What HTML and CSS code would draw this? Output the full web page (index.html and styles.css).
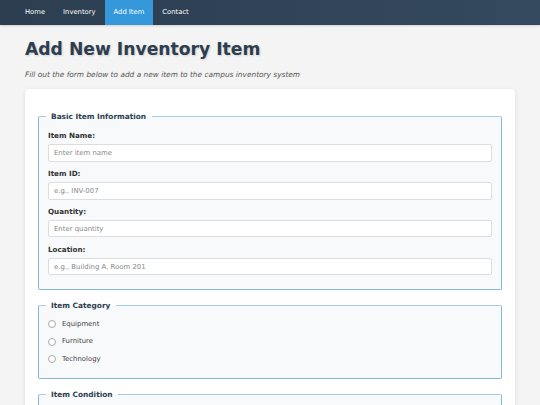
FILE: index.html
```html
<!DOCTYPE html>
<html>
<head>
    <meta charset="utf-8">
    <title>Add Inventory Item</title>
    <link rel="stylesheet" href="styles.css">
</head>
<body>
    <nav class="top-nav">
        <a href="#">Home</a>
        <a href="#">Inventory</a>
        <a href="#" class="active">Add Item</a>
        <a href="#">Contact</a>
    </nav>

    <main class="page">
        <h1>Add New Inventory Item</h1>
        <p class="intro">Fill out the form below to add a new item to the campus inventory system</p>

        <form class="card">
            <fieldset>
                <legend>Basic Item Information</legend>

                <div class="form-group">
                    <label for="item-name">Item Name:</label>
                    <input type="text" id="item-name" placeholder="Enter item name">
                </div>
                <div class="form-group">
                    <label for="item-id">Item ID:</label>
                    <input type="text" id="item-id" placeholder="e.g., INV-007">
                </div>
                <div class="form-group">
                    <label for="quantity">Quantity:</label>
                    <input type="number" id="quantity" placeholder="Enter quantity">
                </div>
                <div class="form-group">
                    <label for="location">Location:</label>
                    <input type="text" id="location" placeholder="e.g., Building A, Room 201">
                </div>
            </fieldset>

            <fieldset>
                <legend>Item Category</legend>
                <label class="radio-option"><input type="radio" name="category" value="equipment"> Equipment</label>
                <label class="radio-option"><input type="radio" name="category" value="furniture"> Furniture</label>
                <label class="radio-option"><input type="radio" name="category" value="technology"> Technology</label>
            </fieldset>

            <fieldset>
                <legend>Item Condition</legend>
                <label class="radio-option"><input type="radio" name="condition" value="new"> New</label>
                <label class="radio-option"><input type="radio" name="condition" value="good"> Good</label>
                <label class="radio-option"><input type="radio" name="condition" value="fair"> Fair</label>
            </fieldset>

            <button type="submit" class="submit-button">Add Item</button>
        </form>
    </main>
</body>
</html>
```

FILE: styles.css
```css
body {
    margin: 0;
    font-family: "DejaVu Sans", Verdana, sans-serif;
    background-color: #f4f4f4;
    color: #333;
}

.top-nav {
    display: flex;
    padding: 0 16px;
    background: linear-gradient(90deg, #2c3e50, #35495e);
    box-shadow: 0 1px 2px rgba(0, 0, 0, 0.15);
}

.top-nav a {
    padding: 9px 9px;
    font-size: 6.8px;
    line-height: 7px;
    color: #fff;
    text-decoration: none;
}

.top-nav a.active {
    background-color: #3498db;
}

.page {
    padding: 0 25px;
}

h1 {
    margin: 14.4px 0 0;
    font-size: 17.2px;
    color: #2c3e50;
    text-shadow: 1px 1px 2px rgba(0, 0, 0, 0.15);
}

.intro {
    margin: 10.2px 0 10.8px;
    font-size: 7.4px;
    font-style: italic;
    color: #555;
}

.card {
    padding: 22.5px 13px 13px;
    background-color: #fff;
    border-radius: 4px;
    box-shadow: 0 1px 4px rgba(0, 0, 0, 0.1);
}

fieldset {
    margin: 0 0 11px;
    padding: 10.5px 9px 6px;
    background-color: #f8f9fb;
    border: 1px solid #82b9d8;
    border-top-color: #a6cde3;
    border-radius: 2px;
}

legend {
    padding: 0 5.5px;
    margin-left: -2.5px;
    font-size: 7.4px;
    font-weight: bold;
    color: #2c3e50;
}

.form-group {
    margin-bottom: 7.3px;
}

.form-group label {
    display: block;
    margin-bottom: 4px;
    font-size: 7.2px;
    font-weight: bold;
    color: #333;
}

.form-group input {
    display: block;
    box-sizing: border-box;
    width: 100%;
    height: 17.5px;
    padding: 0 5px;
    font-family: inherit;
    font-size: 6.9px;
    border: 1px solid #ddd;
    border-radius: 2px;
    background-color: #fff;
}

.form-group input::placeholder {
    color: #888;
}

.radio-option {
    display: flex;
    align-items: center;
    gap: 6px;
    margin-bottom: 9px;
    font-size: 6.9px;
    line-height: 8.3px;
    color: #444;
}

.radio-option input {
    appearance: none;
    width: 8px;
    height: 8px;
    margin: 0;
    border: 1px solid #aaa;
    border-radius: 50%;
    background-color: #fff;
}

.submit-button {
    padding: 8px 16px;
    font-family: inherit;
    font-size: 7px;
    color: #fff;
    background-color: #3498db;
    border: none;
    border-radius: 3px;
}
```
